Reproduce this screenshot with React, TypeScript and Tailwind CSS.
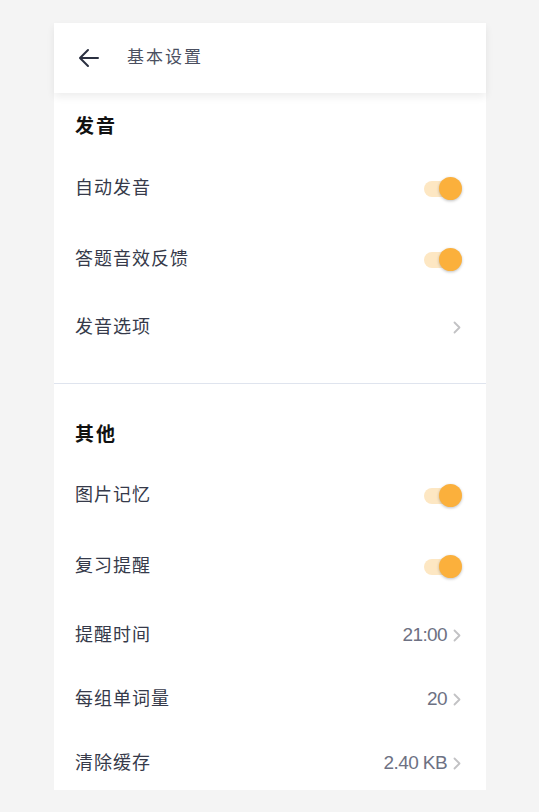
import React from "react";

const font = { fontFamily: '"Liberation Sans", "Noto Sans CJK SC", sans-serif' };

const Toggle = () => (
  <div className="relative w-[38px] h-[23px] flex items-center">
    <div className="w-[31px] h-[16px] rounded-full bg-[#fde7c3]" />
    <div className="absolute right-0 top-0 w-[23px] h-[23px] rounded-full bg-[#fbb03c] shadow-[0_1px_3px_rgba(0,0,0,0.25)]" />
  </div>
);

const Chevron = () => (
  <svg width="8" height="13" viewBox="0 0 8 13" fill="none">
    <path d="M1.5 1.5L6.5 6.5L1.5 11.5" stroke="#c2c2c4" strokeWidth="1.8" strokeLinecap="round" strokeLinejoin="round" />
  </svg>
);

type Row = { label: string; kind: "toggle" | "link"; value?: string; h: string };

const RowItem = ({ row }: { row: Row }) => (
  <div className={`flex items-center justify-between ${row.h}`}>
    <span className="text-[18px] tracking-[1px] text-[#363a4a]">{row.label}</span>
    {row.kind === "toggle" ? (
      <Toggle />
    ) : (
      <div className="flex items-center gap-[6px] pr-[1px]">
        {row.value && <span className="text-[19px] text-[#6d7183] tracking-[-0.6px]">{row.value}</span>}
        <Chevron />
      </div>
    )}
  </div>
);

export default function App() {
  return (
    <div className="min-h-screen bg-[#f4f4f4] pt-[23px]" style={font}>
      <div className="w-[432px] ml-[54px] bg-white">
        <div className="relative z-10 h-[70px] flex items-center pl-[24px] shadow-[0_4px_8px_rgba(0,0,0,0.07)]">
          <svg width="22" height="20" viewBox="0 0 22 20" fill="none">
            <path d="M20 10H2.5M10 2L2 10l8 8" stroke="#2b3040" strokeWidth="2" strokeLinecap="round" strokeLinejoin="round" />
          </svg>
          <span className="ml-[27px] text-[17px] tracking-[2px] text-[#4a4f60]">基本设置</span>
        </div>

        <div className="pl-[21px] pr-[24px] pb-[24px]">
          <div className="h-[60px] pt-[23px] leading-[22px] text-[19px] font-bold tracking-[2px] text-[#111]">发音</div>
          <RowItem row={{ label: "自动发音", kind: "toggle", h: "h-[71px]" }} />
          <RowItem row={{ label: "答题音效反馈", kind: "toggle", h: "h-[71px]" }} />
          <RowItem row={{ label: "发音选项", kind: "link", h: "h-[64px]" }} />
        </div>

        <div className="h-px bg-[#dfe4ee]" />

        <div className="pl-[21px] pr-[24px]">
          <div className="h-[76px] pt-[40px] leading-[22px] text-[19px] font-bold tracking-[2px] text-[#111]">其他</div>
          <RowItem row={{ label: "图片记忆", kind: "toggle", h: "h-[71px]" }} />
          <RowItem row={{ label: "复习提醒", kind: "toggle", h: "h-[71px]" }} />
          <RowItem row={{ label: "提醒时间", kind: "link", value: "21:00", h: "h-[66px]" }} />
          <RowItem row={{ label: "每组单词量", kind: "link", value: "20", h: "h-[63px]" }} />
          <div className="h-[59px] pt-[5px]">
            <RowItem row={{ label: "清除缓存", kind: "link", value: "2.40 KB", h: "h-[54px]" }} />
          </div>
        </div>
      </div>
    </div>
  );
}
